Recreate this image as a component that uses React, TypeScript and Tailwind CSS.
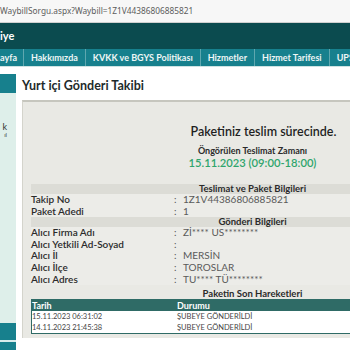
import React from "react";

const font = { fontFamily: "Lato, 'Noto Sans', sans-serif" };

function InfoRow({ label, value }: { label: string; value: string }) {
  return (
    <div className="flex h-[11.6px] items-center bg-[#ecece8] text-[10px] leading-[11.6px]">
      <div className="w-[143px] font-semibold text-[#2b2b2b]">{label}</div>
      <div className="w-[9px] text-[#555]">:</div>
      <div className="flex-1 text-[#5a5a5a]">{value}</div>
    </div>
  );
}

function SectionBar({ title }: { title: string }) {
  return (
    <div className="flex h-[10px] items-center justify-center bg-[#dcdcd6] text-[9.5px] font-bold leading-[10px] text-[#2b2b2b]">
      {title}
    </div>
  );
}

export default function App() {
  const navItems = ["ayfa", "Hakkımızda", "KVKK ve BGYS Politikası", "Hizmetler", "Hizmet Tarifesi", "UPS Türkiye"];
  return (
    <div className="h-[350px] w-[350px] overflow-hidden bg-white" style={font}>
      {/* address bar */}
      <div className="flex h-[23px] items-center border-b border-[#d0d0d0] bg-[#f7f7f7]">
        <span className="whitespace-nowrap text-[8.3px] text-[#5c5c5c]" style={{ fontFamily: "'Noto Sans', sans-serif" }}>
          WaybillSorgu.aspx?Waybill=1Z1V44386806885821
        </span>
      </div>
      {/* header */}
      <div className="flex h-[26px] items-center bg-[#0b4b4f]">
        <span className="text-[11px] font-bold text-white">iye</span>
      </div>
      {/* nav */}
      <div className="flex h-[17px] w-[600px] items-stretch bg-[#17808d]">
        {navItems.map((n, i) => (
          <div key={n} className="flex items-center">
            <div className={`flex h-full items-center ${i === 0 ? "pr-[6px]" : "px-[7px]"} whitespace-nowrap text-[9px] font-bold text-[#eef6f6]`}>
              {n}
            </div>
            <div className="h-full w-[1px] bg-[#5fa7af]" />
          </div>
        ))}
      </div>
      <div className="h-[1px] bg-[#cfe3e3]" />
      {/* content */}
      <div className="flex">
        {/* sidebar */}
        <div className="flex w-[16px] shrink-0 flex-col pt-[7px]">
          <div className="h-[19px] bg-[#17808d]" />
          <div className="relative h-[230px] overflow-hidden bg-[#deefea]">
            <div className="absolute right-[9px] top-[29px] text-right text-[9px] leading-[9px] text-[#333]">k</div>
            <div className="absolute right-[9px] top-[39px] text-right text-[6px] leading-[6px] text-[#444]">ıl</div>
          </div>
          <div className="h-[17px] bg-[#17808d]" />
          <div className="h-[2px] bg-[#d8ecec]" />
          <div className="h-[20px] bg-[#17808d]" />
        </div>
        {/* main */}
        <div className="ml-[6px] w-[460px] shrink-0">
          <div className="flex h-[33px] items-center pt-[5px] text-[12.5px] font-bold text-[#1e2b2b]">
            Yurt içi Gönderi Takibi
          </div>
          <div className="border-l border-t-2 border-l-[#d4d4cc] border-t-[#c6c6be] bg-[#e9e9e4] px-[8px] pb-[4px] pt-[22px]">
            <div className="ml-[22px] flex h-[16px] items-center justify-center text-[12.5px] font-semibold leading-[16px] text-[#1f1f1f]">
              Paketiniz teslim sürecinde.
            </div>
            <div className="mt-[6px] flex flex-col items-center">
              <div className="h-[10px] text-[9px] font-bold leading-[10px] text-[#2b2b2b]">Öngörülen Teslimat Zamanı</div>
              <div className="h-[13px] text-[11.2px] font-semibold leading-[13px] text-[#2fa56c]">15.11.2023 (09:00-18:00)</div>
            </div>
            <div className="mt-[15px]">
              <SectionBar title="Teslimat ve Paket Bilgileri" />
              <InfoRow label="Takip No" value="1Z1V44386806885821" />
              <InfoRow label="Paket Adedi" value="1" />
              <SectionBar title="Gönderi Bilgileri" />
              <InfoRow label="Alıcı Firma Adı" value="Zİ**** US********" />
              <InfoRow label="Alıcı Yetkili Ad-Soyad" value="" />
              <InfoRow label="Alıcı İl" value="MERSİN" />
              <InfoRow label="Alıcı İlçe" value="TOROSLAR" />
              <InfoRow label="Alıcı Adres" value="TU**** TÜ********" />
              <div className="flex h-[14px] items-start justify-center pt-[4px] text-[9.5px] font-bold leading-[10px] text-[#2b2b2b]">
                Paketin Son Hareketleri
              </div>
              <div className="border border-[#2f6b66]">
                <div className="flex h-[11px] items-center bg-[#2f6b66] text-[9px] font-bold leading-[11px] text-white">
                  <div className="w-[145px]">Tarih</div>
                  <div>Durumu</div>
                </div>
                {[
                  ["15.11.2023 06:31:02", "ŞUBEYE GÖNDERİLDİ"],
                  ["14.11.2023 21:45:38", "ŞUBEYE GÖNDERİLDİ"],
                ].map(([d, s]) => (
                  <div key={d} className="flex h-[11px] items-center bg-white text-[7.5px] leading-[11px] text-[#444]">
                    <div className="w-[145px]">{d}</div>
                    <div>{s}</div>
                  </div>
                ))}
              </div>
            </div>
          </div>
        </div>
      </div>
    </div>
  );
}
